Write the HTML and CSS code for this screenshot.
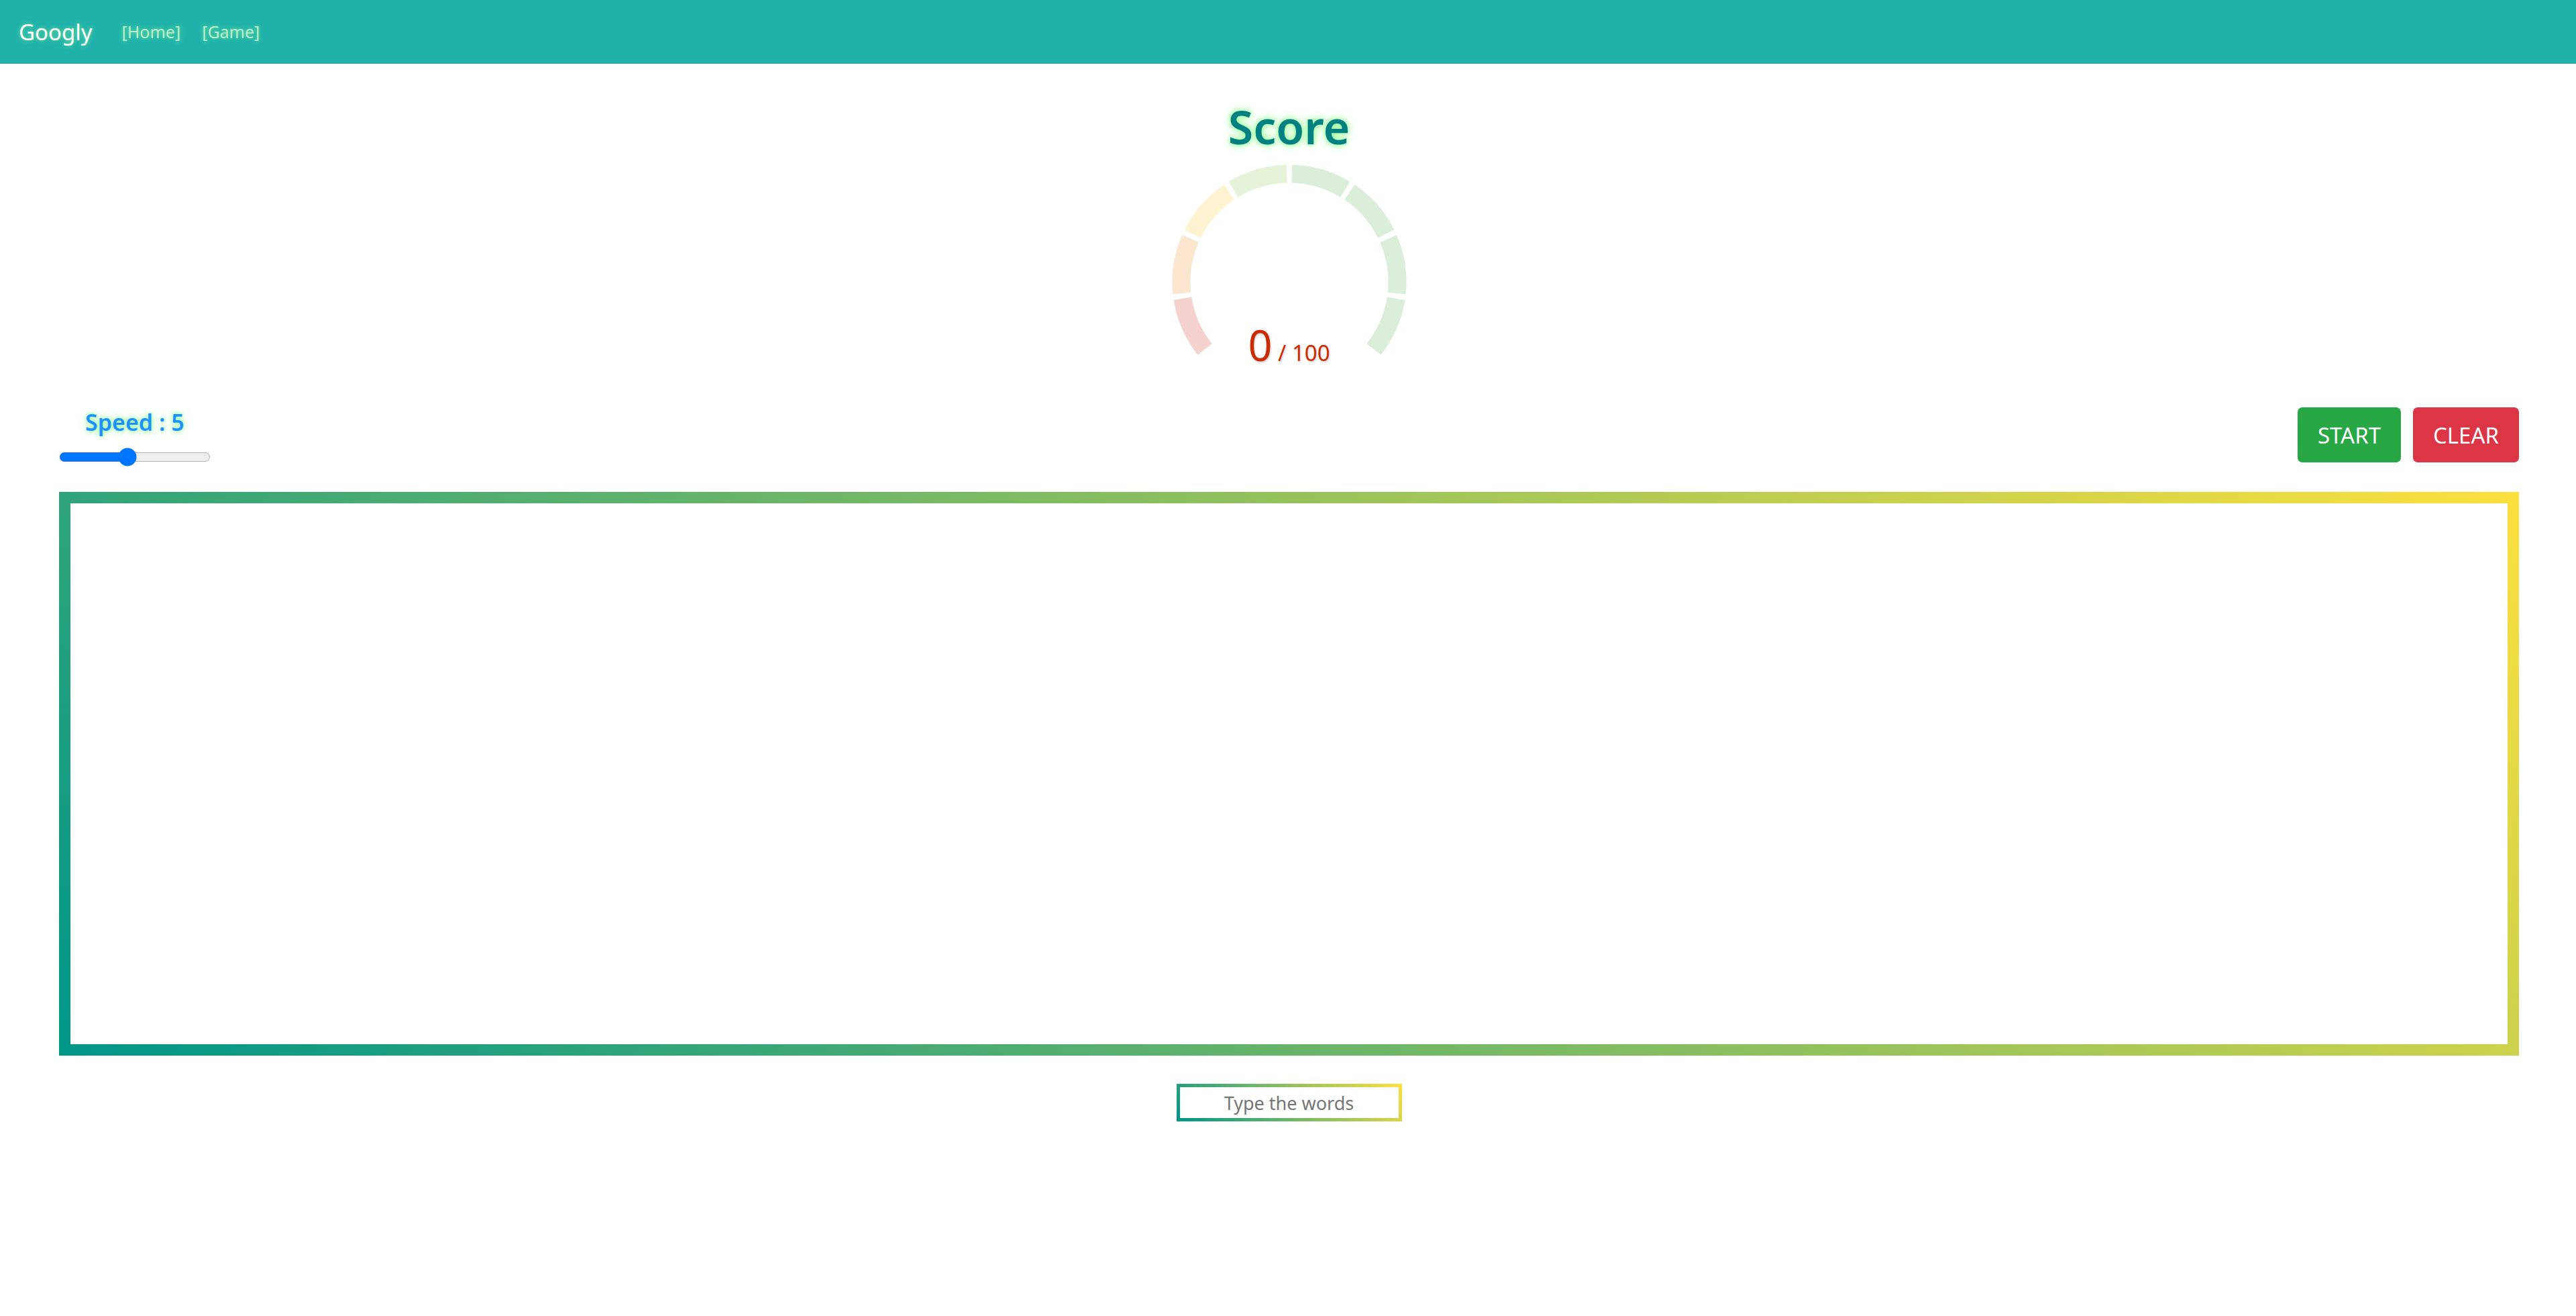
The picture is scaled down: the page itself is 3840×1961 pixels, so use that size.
FILE: index.html
```html
<!DOCTYPE html>
<html lang="en">
<head>
<meta charset="utf-8">
<title>Googly</title>
<link rel="stylesheet" href="styles.css">
</head>
<body>
<nav class="navbar">
  <span class="brand">Googly</span>
  <a class="nav-link" href="#">[Home]</a>
  <a class="nav-link" href="#">[Game]</a>
</nav>
<main class="main">
  <h1 class="score-title">Score</h1>
  <div class="gauge">
    <svg class="gauge-svg" width="360" height="310" viewBox="0 0 360 310">
      <g fill="none" stroke-width="27" stroke-linecap="butt">
        <path d="M54.2 297.4 A161 161 0 0 1 20.9 221.9" stroke="#f5d2cd"/>
        <path d="M19.9 214.1 A161 161 0 0 1 32.5 132.6" stroke="#fbe6d0"/>
        <path d="M35.8 125.4 A161 161 0 0 1 90.2 63.4" stroke="#fdf3d0"/>
        <path d="M96.8 59.1 A161 161 0 0 1 176.1 36.0" stroke="#e7f3d8"/>
        <path d="M183.9 36.0 A161 161 0 0 1 263.2 59.1" stroke="#daeed9"/>
        <path d="M269.8 63.4 A161 161 0 0 1 324.2 125.4" stroke="#daeed9"/>
        <path d="M327.5 132.6 A161 161 0 0 1 340.1 214.1" stroke="#daeed9"/>
        <path d="M339.1 221.9 A161 161 0 0 1 305.8 297.4" stroke="#daeed9"/>
      </g>
    </svg>
    <div class="gauge-value"><span class="gauge-num">0</span><span class="gauge-max"> / 100</span></div>
  </div>
  <div class="controls">
    <div class="speed">
      <label class="speed-label" for="speed">Speed : 5</label>
      <input class="speed-range" id="speed" type="range" min="1" max="10" value="5">
    </div>
    <div class="buttons">
      <button class="btn btn-start">START</button>
      <button class="btn btn-clear">CLEAR</button>
    </div>
  </div>
  <div class="board"></div>
  <div class="input-wrap">
    <input class="word-input" type="text" placeholder="Type the words">
  </div>
</main>
</body>
</html>
```

FILE: styles.css
```css
html, body {
  margin: 0;
  padding: 0;
  background: #ffffff;
}

body {
  font-family: "Noto Sans", "Open Sans", sans-serif;
}

.navbar {
  height: 95px;
  background: #20b2aa;
  display: flex;
  align-items: center;
  padding-left: 28px;
}

.brand {
  color: #ffffff;
  font-size: 33px;
  line-height: 1;
  margin-right: 44px;
  text-shadow: 0 0 6px rgba(152, 251, 152, 0.7);
}

.nav-link {
  color: #b8efcc;
  font-size: 25px;
  line-height: 1;
  text-decoration: none;
  margin-right: 32px;
  text-shadow: 0 0 6px rgba(152, 251, 152, 0.7);
}

.main {
  padding: 0 85px 0 88px;
}

.score-title {
  margin: 60px 0 0;
  text-align: center;
  font-size: 68px;
  line-height: 1;
  font-weight: 600;
  color: #008080;
  text-shadow: 0 0 14px #98fb98, 0 0 6px #98fb98;
}

.gauge {
  position: relative;
  width: 360px;
  height: 330px;
  margin: 0 auto;
}

.gauge-svg {
  display: block;
}

.gauge-value {
  position: absolute;
  left: 0;
  right: 0;
  top: 259px;
  text-align: center;
  line-height: 1;
  font-size: 63px;
  color: #cc2a00;
  text-shadow: 1px 2px 3px rgba(0, 0, 0, 0.18);
}

.gauge-max {
  font-size: 33px;
}

.controls {
  margin-top: 54px;
  display: flex;
  justify-content: space-between;
  align-items: flex-start;
}

.speed {
  display: flex;
  flex-direction: column;
  align-items: center;
  padding-top: 5px;
}

.speed-label {
  font-size: 34px;
  line-height: 1;
  font-weight: 600;
  color: #1e90ff;
  text-shadow: 0 0 12px #98fb98, 0 0 5px #98fb98;
  margin-bottom: 21px;
}

.speed-range {
  zoom: 1.75;
  margin: 0;
}

.buttons {
  display: flex;
  gap: 18px;
}

.btn {
  height: 82px;
  border: 0;
  border-radius: 7px;
  color: #ffffff;
  font-family: "Noto Sans", "Open Sans", sans-serif;
  font-size: 33px;
  padding: 0;
}

.btn-start {
  width: 154px;
  background: #28a745;
}

.btn-clear {
  width: 158px;
  background: #dc3545;
}

.board {
  margin-top: 38px;
  height: 840px;
  box-sizing: border-box;
  border: 17px solid #009688;
  border-image: linear-gradient(45deg, #009688, #fbe03e) 1;
}

.input-wrap {
  display: flex;
  justify-content: center;
  margin-top: 42px;
}

.word-input {
  width: 336px;
  height: 56px;
  box-sizing: border-box;
  border: 5px solid #009688;
  border-image: linear-gradient(45deg, #009688, #fbe03e) 1;
  text-align: center;
  font-family: "Noto Sans", "Open Sans", sans-serif;
  font-size: 27px;
  outline: none;
  padding: 0;
}

.word-input::placeholder {
  color: #757575;
}
```
